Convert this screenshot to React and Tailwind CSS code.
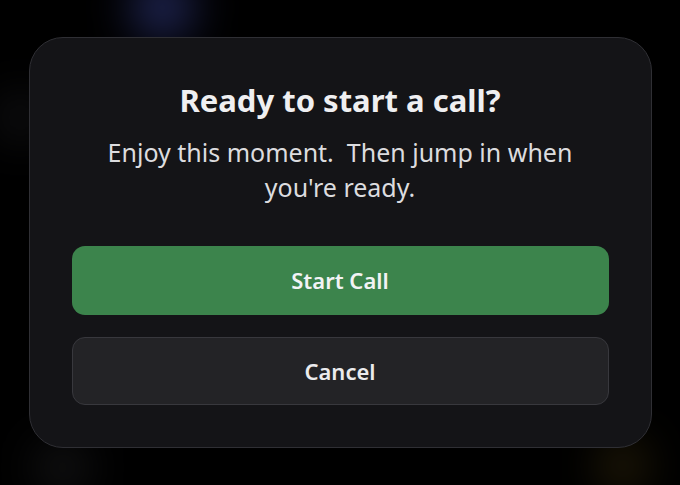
import React from "react";

const font = { fontFamily: '"Noto Sans", "Open Sans", sans-serif' };

const Glow = ({ className }) => (
  <div className={`pointer-events-none absolute rounded-full blur-xl ${className}`} />
);

const App = () => {
  return (
    <div className="relative w-[680px] h-[485px] overflow-hidden bg-black" style={font}>
      {/* background blur behind the sheet */}
      <Glow className="left-[135px] top-[-20px] w-[55px] h-[55px] bg-[#2b3372]" />
      <Glow className="left-[8px] top-[100px] w-[25px] h-[35px] bg-[#2c2c32]" />
      <Glow className="left-[40px] top-[450px] w-[45px] h-[35px] bg-[#222224]" />
      <Glow className="left-[605px] top-[448px] w-[35px] h-[35px] bg-[#4a3a10]" />

      <div className="relative flex h-full items-start justify-center pt-[37px]">
        <div className="flex w-[623px] h-[411px] flex-col items-center rounded-[34px] border border-[#2f2f34] bg-[#141417] px-[42px] pt-[42px]">
          <h2 className="text-[31px] font-bold leading-[40px] text-[#efeff1]">
            Ready to start a call?
          </h2>
          <p className="mt-[15px] w-[500px] text-center text-[25px] leading-[35px] text-[#dcdcdf]">
            Enjoy this moment.&nbsp; Then jump in when you're ready.
          </p>

          <div className="mt-[41px] flex w-full flex-col gap-[22px]">
            <button className="flex h-[69px] w-full items-center justify-center rounded-[13px] bg-[#3c844c] text-[22px] font-semibold text-[#f2f3f5]">
              Start Call
            </button>
            <button className="flex h-[68px] w-full items-center justify-center rounded-[13px] border border-[#38383d] bg-[#232326] text-[22px] font-semibold text-[#ebebed]">
              Cancel
            </button>
          </div>
        </div>
      </div>
    </div>
  );
};

export default App;
